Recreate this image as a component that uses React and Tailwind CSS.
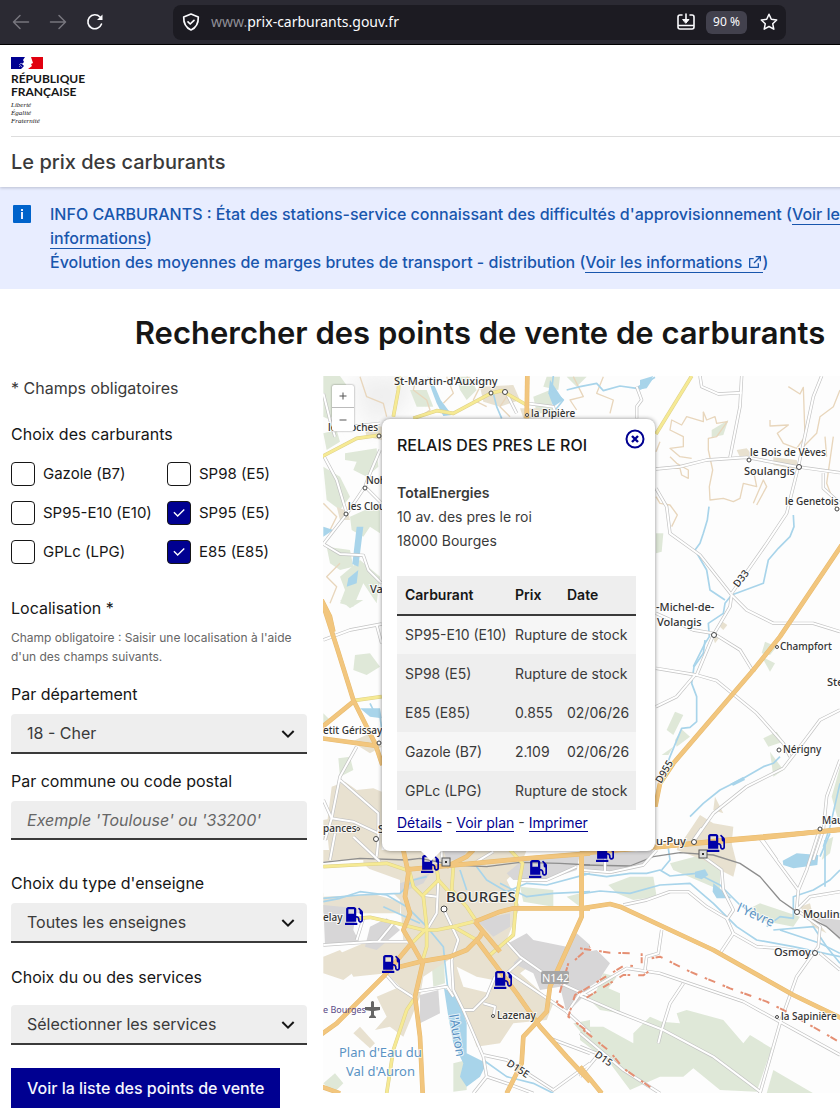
import React, { useState } from "react";
import { RiAddLine, RiArrowDownSLine, RiCheckLine, RiExternalLinkLine, RiSubtractLine } from "react-icons/ri";
import { FaGasPump } from "react-icons/fa";

const FUELS = [
  { id: "gazole", label: "Gazole (B7)" },
  { id: "sp98", label: "SP98 (E5)" },
  { id: "e10", label: "SP95-E10 (E10)" },
  { id: "sp95", label: "SP95 (E5)" },
  { id: "gplc", label: "GPLc (LPG)" },
  { id: "e85", label: "E85 (E85)" },
];

const PRICES = [
  { fuel: "SP95-E10 (E10)" },
  { fuel: "SP98 (E5)" },
  { fuel: "E85 (E85)", price: "0.855", date: "02/06/26" },
  { fuel: "Gazole (B7)", price: "2.109", date: "02/06/26" },
  { fuel: "GPLc (LPG)" },
];

// Pin positions, from the top left corner of the map
const PINS = [
  { left: 98, top: 479 },
  { left: 22, top: 531 },
  { left: 59, top: 579 },
  { left: 171, top: 595 },
  { left: 206, top: 484 },
  { left: 384, top: 458 },
  { left: 273, top: 468 },
];

// Map tiles, drawn three units to the pixel
const TILES = [
  {
    x: -3, y: -6,
    forest: [
      "10,18 60,18 90,60 60,100 30,150 10,140", "10,190 50,180 60,215 20,240", "75,250 170,235 175,290 140,320 100,300 110,275 75,270",
      "10,290 60,320 90,380 60,420 20,390", "90,440 180,400 180,490 150,470 130,500 95,480", "20,530 90,540 100,590 60,600 30,580",
      "120,570 180,620 170,700 130,640 100,710 60,700 75,660 60,620", "410,20 450,20 470,60 440,90 420,60", "640,80 690,60 700,130 650,130",
      "270,60 320,60 340,110 290,110", "740,20 800,20 770,50", "680,20 720,20 715,60 670,50",
    ],
    town: ["480,50 580,45 600,90 540,110 490,95", "130,160 185,170 185,210 140,200", "50,410 85,425 90,450 60,450", "600,115 660,115 650,145 610,145"],
    water: ["322,18 345,50 362,90 396,135 370,138 350,100 335,60", "110,470 130,470 115,590 97,582", "10,470 40,480 10,500", "85,625 115,600 110,640 80,650", "690,30 730,90 700,110 685,70", "950,50 1000,25 980,55 950,60"],
    river: ["520,70 530,110 545,145", "700,18 695,60 730,90 690,140", "740,60 780,50 830,40 850,62 900,48 950,55 1005,22"],
    contour: [
      "290,20 280,60 320,90 330,120 300,140", "440,20 480,50 460,90 500,110", "560,80 540,110 570,140", "760,20 790,80 750,90 770,120",
      "850,20 830,70 880,90 870,130", "10,400 50,440 30,480", "60,580 20,620 50,650 30,700", "120,20 140,80 190,100 200,140", "380,20 400,70 370,100",
    ],
    white: [
      "10,70 30,150 45,200", "10,255 50,330 80,430", "180,240 150,310 135,350 80,432 10,522", "10,522 60,552 130,556 145,600 185,640", "135,350 185,400",
      "560,70 590,130", "620,100 700,110 710,140", "950,50 965,90 950,110 950,145", "90,170 180,160",
    ],
    yellow: ["238,18 235,60 220,140", "280,145 350,122 400,130 512,70 545,62 620,105", "5,260 110,205 183,195"],
    orange: ["622,18 620,145", "5,690 30,740 40,785"],
  },
  {
    x: 317, y: -6,
    forest: ["215,180 265,150 250,195 215,202", "48,490 70,490 65,545 48,550", "375,815 410,830 390,855 365,850"],
    town: ["290,240 320,235 350,270 300,262", "400,262 470,270 475,300 400,285", "248,755 262,765 250,780 240,770", "215,790 240,800 225,820"],
    water: ["0,30 40,18 20,50 0,60"],
    river: ["207,410 202,450 190,490 180,520 165,540 200,600 210,660 255,690", "460,435 462,470 450,500 415,535 385,570 370,640 275,675 255,700 250,730 205,760 208,800 195,820 160,890"],
    contour: [
      "190,125 200,150 225,140 230,160 262,155 230,200 205,205 205,240 218,300 208,350 210,390 250,385 280,395 300,385 310,340 350,350 340,300",
      "190,125 190,155 140,140 125,165 95,150 90,180 130,200 130,230 90,235 120,260 155,265", "60,215 48,245", "90,260 110,280 145,300 145,325 125,315 120,295 100,295",
      "445,50 480,72 490,52 495,200 470,235 430,220 412,190 445,165 390,168 390,150", "48,380 60,400 90,405 112,435 95,470", "600,60 580,110 540,140 530,190 490,230",
      "340,400 370,330 380,350 350,405", "555,200 560,260", "580,200 560,340 590,420",
    ],
    white: [
      "180,18 185,50 235,72 305,68", "305,18 300,110 270,262", "48,297 120,290 200,270 320,262 470,290 600,308", "545,18 520,80 475,290 440,430 380,520 275,670",
      "550,310 550,355 600,400", "48,355 80,410 90,490 180,555 275,675 320,720 400,760 520,760 600,785", "275,675 270,710 220,795 170,915", "48,730 160,780 220,790 300,840 340,905",
    ],
    yellow: ["155,18 48,192"],
    orange: ["605,525 420,800 340,900"],
  },
  {
    x: -3, y: 224,
    forest: ["105,165 150,160 180,200 140,225 100,210", "60,0 130,0 90,25", "55,475 90,470 100,510 60,530", "10,340 30,360 10,380", "40,600 60,600 50,640"],
    town: ["35,560 75,545 110,570 160,565 185,575 185,780 30,780 20,680", "95,425 150,400 185,440 150,460", "10,660 60,650 60,720 10,720"],
    water: ["120,325 180,325 185,355 150,350"],
    river: ["150,310 160,330", "180,350 187,400"],
    white: ["10,120 90,90 185,72", "170,75 185,130", "110,440 60,530 35,655 15,720", "60,540 175,640 175,720", "35,655 100,665 175,700", "10,600 35,655", "175,720 170,770"],
    yellow: ["100,302 185,290"],
    orange: ["8,10 50,140 100,300 165,430 187,495", "5,382 100,305", "5,415 165,437"],
  },
  {
    x: 317, y: 264,
    forest: [
      "105,215 130,225 100,285 80,270", "125,268 150,290 110,320 105,300", "65,345 100,320 85,345", "370,295 410,275 430,305 385,320", "390,335 430,390 400,410", "365,50 405,70 390,95",
      "600,380 575,470 600,560", "560,600 580,590 570,640 545,660",
    ],
    town: ["180,525 220,550 280,560 270,660 130,600", "225,470 250,520 220,510"],
    water: ["270,432 310,410 315,420 280,437"],
    river: ["195,0 190,40 162,80 155,130 170,170 170,245 150,262 125,265 90,350 60,430", "420,350 400,370 370,380 310,415 240,450 190,490 150,530", "600,430 570,560 550,620"],
    white: [
      "48,85 170,105 230,122 350,220 430,310 450,350", "48,200 110,170 165,105", "600,210 540,240 480,320 430,385 320,440 220,520 160,605", "600,360 560,470 550,570 520,660", "365,595 410,660",
    ],
    orange: ["342,88 100,370 60,430 46,500", "45,622 250,600 600,570"],
  },
  {
    x: -3, y: 454,
    forest: [
      "50,115 75,115 75,170 50,195", "330,330 370,350 375,460 340,470", "600,170 700,180 700,230 610,215", "10,760 45,730 70,760 40,790", "400,700 440,690 440,780 400,785",
      "760,580 810,570 810,640", "740,200 780,190 780,230",
    ],
    town: [
      "130,60 620,60 600,110 560,150 600,230 560,330 640,400 600,430 700,520 680,570 580,580 540,640 470,650 440,560 400,500 400,380 310,440 300,500 250,620 210,590 165,600 200,560 170,500 240,470 200,430 100,440 60,370 130,340 250,335 240,210 130,100",
      "10,380 60,360 110,420 70,450 10,430", "120,590 165,640 150,655 100,610", "10,190 120,180 240,215 240,250 10,250", "10,60 60,60 50,90 10,95",
    ],
    industry: [
      "10,225 110,235 100,300 120,340 15,345", "150,290 200,265 240,300 170,360 135,350", "240,160 330,130 310,160 240,190", "560,130 620,80 780,70 770,120 680,150 580,150", "470,270 570,250 570,290 520,320",
      "565,340 620,310 640,330 740,350 770,310 810,345 810,480 740,550 720,470 660,480 640,430 580,400 600,380", "300,495 355,480 360,550 300,580", "370,60 440,60 430,90 380,90",
    ],
    open: ["410,410 470,440 520,450 510,490 430,470", "10,110 130,110 240,150 240,190 10,200"],
    water: ["372,475 415,500 440,580 440,670 500,700 480,740 440,770 420,740 430,700 400,640 385,560"],
    river: [
      "10,215 60,205 120,185 200,195 260,230 320,290 370,350 375,400 385,490", "10,205 120,195 240,190 280,150 320,140", "190,230 300,280", "470,110 500,150 560,185 620,160 680,165 810,130",
      "540,160 620,200 700,190 810,185", "490,690 560,740 640,760 700,790", "420,120 440,180",
    ],
    rail: ["10,97 120,85 260,90 300,85 400,105 500,110 600,97 720,100 810,105"],
    white: [
      "355,150 350,250 320,300", "372,240 415,330 395,390 400,480 430,540 460,540 500,500 525,440", "10,345 160,335 270,335", "130,265 110,330", "220,280 175,335", "285,485 380,470 400,500",
      "195,430 230,470 285,505", "430,540 490,680 500,740 460,790", "490,675 560,690 700,780 810,700", "570,430 740,545 810,610", "560,335 600,380 700,450 810,500", "490,520 525,530 520,560",
      "560,430 605,390", "500,740 560,760 640,790", "690,625 810,670", "740,550 780,490", "30,90 45,10", "180,95 100,20", "310,195 350,200", "600,150 680,150 770,110", "365,60 365,90", "470,95 520,65",
    ],
    yellow: [
      "10,110 100,105 200,100 260,120", "110,265 150,262 230,280 310,300 350,300 400,290 460,275", "265,110 280,170 310,200 320,290 320,350 305,400", "570,60 608,100 590,200 580,315 510,375",
      "350,110 355,150 310,195", "355,150 400,200", "400,290 470,330", "400,110 395,180 440,230 470,275", "320,295 270,345", "280,510 260,540 220,660 200,790",
    ],
    orange: [
      "250,60 265,130 255,200 270,250 250,300 280,350 308,400 285,500 300,620 308,790", "5,612 50,580 190,440 270,345", "240,410 300,395 390,380 440,360 480,320 490,300", "265,118 330,112 460,100 620,85 810,70",
      "465,275 540,245 580,235 810,235", "785,75 785,260 690,470 680,545 610,620 605,700 560,790", "470,330 530,410 590,490 660,590 740,680 810,755", "465,275 540,365", "380,110 440,80 460,60", "5,770 60,790",
    ],
    military: ["765,390 810,350", "745,400 710,520 740,540", "780,485 765,495 745,560 810,610"],
  },
  {
    x: 257, y: 454,
    forest: [
      "85,165 150,140 220,140 230,200 160,210 110,190", "270,100 420,60 420,180 350,150 280,120", "500,240 540,220 660,260 640,290 540,270",
      "0,590 70,590 160,640 160,610 210,560 245,575 300,580 290,550 320,540 430,570 490,640 510,615 575,655 530,785 420,780 340,715 310,740 240,740 150,780 90,700 0,630", "580,720 700,790 560,790",
      "70,430 110,440 85,475 120,490 120,550 60,540 20,500 50,480",
    ],
    town: ["290,60 300,30 450,20 470,100 460,140 420,120 370,90", "660,230 690,220 700,260 740,310 700,290"],
    industry: ["0,370 50,360 90,400 70,430 60,450 0,490", "10,75 220,60 200,100 100,130 10,115", "700,260 780,270 780,330 740,290"],
    water: ["608,92 650,70 715,75 712,105 640,115 610,105", "345,125 375,118 385,135 365,148 345,142", "400,160 455,205 410,205 398,185"],
    river: [
      "10,130 80,140 150,130 200,130 240,120 270,138 350,130 420,165 480,225 520,250", "10,190 60,183 150,190 240,165 330,160 400,220 470,290 530,330 640,350 780,380", "560,290 600,260 640,265 640,200 700,180 750,150 780,120",
      "580,300 700,290 740,350 780,400", "265,55 270,90 245,120", "735,30 735,170", "600,300 720,340 780,370", "750,10 720,80",
    ],
    rail: ["10,105 150,108 220,80 300,68 400,75 480,100 540,140 600,210 650,245 740,290 780,325"],
    white: [
      "10,120 90,127 190,105 230,60", "130,225 200,210 270,185 325,185 380,230 440,265 460,310 530,350 600,355 700,370", "370,80 425,120 430,180 460,240 440,270", "460,310 420,370", "245,300 235,370 200,380 195,420",
      "540,25 655,180 650,240 720,290 715,350 700,370 650,440 600,580 540,790", "655,180 680,120 715,10", "650,240 690,200 780,185", "0,497 140,415 240,430 490,515 780,675", "310,460 270,520 245,600 235,640",
      "0,497 110,545 250,600 400,680 540,785", "0,610 130,720 240,790", "340,30 365,-5", "0,650 50,670", "50,680 0,740", "720,370 780,420", "75,80 75,125",
    ],
    orange: ["0,70 240,50 540,24 780,-2", "5,70 5,240", "0,236 90,222 120,230 400,360 640,495 785,565", "0,710 65,790"],
    military: ["0,355 90,368 160,370", "185,370 185,400", "215,385 240,380 330,425 450,475 560,515 620,545 785,640", "0,487 135,405 160,408", "205,425 190,436 130,435 0,515", "10,600 90,665 130,715 230,785"],
  },
];

const PLACES = [
  { x: 394, y: 385, size: 11, text: "St-Martin-d'Auxigny" },
  { x: 531, y: 417, size: 10, text: "la Pipière" },
  { x: 328, y: 431, size: 10, text: "les Roches" },
  { x: 366, y: 484, size: 10, text: "Noh" },
  { x: 348, y: 510, size: 10, text: "les Clou" },
  { x: 370, y: 593, size: 11, text: "Va" },
  { x: 323, y: 734, size: 10, text: "etit Gérissay" },
  { x: 323, y: 832, size: 10, text: "pances" },
  { x: 378, y: 833, size: 11, text: "S" },
  { x: 750, y: 456, size: 10, text: "le Bois de Vèves" },
  { x: 744, y: 475, size: 11, text: "Soulangis" },
  { x: 785, y: 505, size: 10, text: "le Genetois" },
  { x: 656, y: 611, size: 11, text: "-Michel-de-" },
  { x: 657, y: 626, size: 11, text: "Volangis" },
  { x: 780, y: 650, size: 10, text: "Champfort" },
  { x: 827, y: 686, size: 11, text: "Ste-Solange" },
  { x: 783, y: 753, size: 10, text: "Nérigny" },
  { x: 822, y: 824, size: 10, text: "Maubranche" },
  { x: 656, y: 845, size: 11, text: "u-Puy" },
  { x: 803, y: 918, size: 11, text: "Moulins-sur-Yèvre" },
  { x: 774, y: 956, size: 11, text: "Osmoy" },
  { x: 781, y: 1020, size: 10, text: "la Sapinière" },
  { x: 497, y: 1019, size: 10, text: "Lazenay" },
  { x: 323, y: 921, size: 10, text: "elay" },
  { x: 446, y: 902, size: 15, text: "BOURGES" },
];

// Small rings that mark a village or a hamlet
const DOTS = [
  [491, 393, 2], [505, 392, 2.5], [527, 415, 1.5], [379, 436, 2], [365, 488, 2], [346, 514, 2], [379, 743, 2], [358, 829, 1.5], [376, 839, 2.5], [749, 460, 2], [799, 467, 2.5],
  [837, 509, 2], [714, 635, 2.5], [777, 647, 1.5], [779, 750, 2], [820, 829, 2], [694, 842, 2.5], [797, 912, 2.5], [815, 953, 2.5], [777, 1017, 1.5], [493, 1016, 1.5], [444, 909, 3],
];

function Areas({ kind, className }) {
  return TILES.map((tile, i) => (
    <g key={i} transform={`translate(${tile.x + 323} ${tile.y + 376}) scale(0.33333)`} className={className}>
      {(tile[kind] || []).map((points) => <polygon key={points} points={points} />)}
    </g>
  ));
}

function Lines({ kind, className, width, dash }) {
  return TILES.map((tile, i) => (
    <g
      key={i} transform={`translate(${tile.x + 323} ${tile.y + 376}) scale(0.33333)`}
      className={className} fill="none" strokeWidth={width} strokeDasharray={dash} strokeLinejoin="round"
    >
      {(tile[kind] || []).map((points) => <polyline key={points} points={points} />)}
    </g>
  ));
}

function MapDrawing() {
  return (
    <svg viewBox="323 376 626 717" preserveAspectRatio="xMinYMin slice" className="block w-full h-full font-['Noto_Sans',sans-serif]" role="img" aria-label="Carte des points de vente">
      <defs>
        <filter id="relief" x="-50%" y="-50%" width="200%" height="200%"><feGaussianBlur stdDeviation="12" /></filter>
      </defs>
      <rect x="323" y="376" width="626" height="717" fill="#fdfdfd" />
      <polygon points="350,376 420,376 400,410 370,430" fill="#eeeeee" filter="url(#relief)" />
      <Areas kind="forest" className="fill-[#dfe8d8]" />
      <Areas kind="town" className="fill-[#e8e1d0]" />
      <Areas kind="industry" className="fill-[#d7d6d7]" />
      <Areas kind="open" className="fill-[#fdfdfd]" />
      <Lines kind="contour" className="stroke-[#e8d6bc]" width={4} />
      <Areas kind="water" className="fill-[#a8d4ea]" />
      <Lines kind="river" className="stroke-[#a8d4ea]" width={5} />
      <Lines kind="rail" className="stroke-[#8e8e8e]" width={4} />
      <Lines kind="white" className="stroke-[#c3c3c3]" width={10} />
      <Lines kind="white" className="stroke-white" width={6} />
      <Lines kind="yellow" className="stroke-[#ddd08a]" width={11} />
      <Lines kind="yellow" className="stroke-[#f6ea94]" width={8} />
      <Lines kind="orange" className="stroke-[#e8bb6f]" width={14} />
      <Lines kind="orange" className="stroke-[#f2c67e]" width={11} />
      <Lines kind="military" className="stroke-[#e58f73]" width={6} dash="8 4 22 24" />

      {DOTS.map(([x, y, r]) => (
        <circle key={`${x}-${y}`} cx={x} cy={y} r={r} fill="#fff" stroke="#444" />
      ))}
      {[[446, 862], [703, 854]].map(([x, y]) => (
        <g key={x}>
          <rect x={x - 4} y={y - 4} width="8" height="8" fill="#ddd" stroke="#555" />
          <rect x={x - 1} y={y - 1} width="2" height="2" fill="#333" />
        </g>
      ))}

      <g fill="#333" fontWeight="500" stroke="#fff" strokeWidth="2" strokeOpacity="0.8" paintOrder="stroke">
        {PLACES.map((place) => (
          <text key={place.text} x={place.x} y={place.y} fontSize={place.size}>{place.text}</text>
        ))}
        <text fontSize="10" transform="translate(738 588) rotate(-52)">D33</text>
        <text fontSize="10" transform="translate(661 784) rotate(-60)">D955</text>
        <text fontSize="10" transform="translate(506 1065) rotate(33)">D15E</text>
        <text fontSize="10" transform="translate(594 1056) rotate(35)">D15</text>
      </g>
      <rect x="541" y="971" width="28" height="13" rx="2" fill="#a6a6a6" />
      <text x="542" y="982" fontSize="11" fill="#fff">N142</text>
      <g fill="#5b93c4" stroke="#fff" strokeWidth="2" strokeOpacity="0.7" paintOrder="stroke">
        <text x="339" y="1057" fontSize="13">Plan d'Eau du</text>
        <text x="346" y="1076" fontSize="13">Val d'Auron</text>
        <text fontSize="13" transform="translate(449 1015) rotate(80)">l'Auron</text>
        <text fontSize="13" transform="translate(736 911) rotate(24)">l'Yèvre</text>
      </g>
      <text x="323" y="1013" fontSize="9" fill="#5a4a86">e Bourges</text>
      <path d="M371 1002 q1.500 -2 3 0 V1007 H380 V1010 L374 1011 V1015 L376 1017 V1018 H369 V1017 L371 1015 V1011 L365 1010 V1007 H371 Z" fill="#666" />
    </svg>
  );
}

function StationPopup({ onClose }) {
  return (
    <div className="absolute left-[59px] top-[43px] w-[273px] bg-white rounded-lg shadow-[0_0_4px_rgba(0,0,0,0.45)] px-[15px] pt-[14px] pb-4 text-[#3a3a3a]">
      <div className="flex justify-between">
        <h2 className="text-base leading-6 font-medium text-[#161616]">RELAIS DES PRES LE ROI</h2>
        <button type="button" onClick={onClose} aria-label="Fermer" className="-mr-[5px] -mt-1 h-5 text-[#000091]">
          <svg viewBox="0 0 20 20" className="w-5 h-5" fill="none" stroke="currentColor">
            <circle cx="10" cy="10" r="8.500" strokeWidth="2" />
            <path d="M7 7l6 6M13 7l-6 6" strokeWidth="2.400" />
          </svg>
        </button>
      </div>

      <address className="not-italic text-sm leading-6 mt-6">
        <strong className="block font-semibold">TotalEnergies</strong>
        10 av. des pres le roi<br />
        18000 Bourges
      </address>

      <table className="mt-[23px] w-[239px] text-sm text-left whitespace-nowrap table-fixed">
        <thead className="bg-[#eeeeee] text-[#161616] border-b-2 border-[#3a3a3a]">
          <tr className="h-[39px]">
            <th className="w-[110px] pl-2 font-semibold">Carburant</th>
            <th className="w-[52px] pl-2 font-semibold">Prix</th>
            <th className="pl-2 font-semibold">Date</th>
          </tr>
        </thead>
        <tbody>
          {PRICES.map((row) => (
            <tr key={row.fuel} className="h-[39px] bg-[#f6f6f6] even:bg-[#eeeeee] nth-3:bg-[#eeeeee] nth-4:bg-[#f6f6f6] nth-5:bg-[#eeeeee]">
              <td className="pl-2">{row.fuel}</td>
              {row.price ? (
                <>
                  <td className="pl-2">{row.price}</td>
                  <td className="pl-2">{row.date}</td>
                </>
              ) : (
                <td colSpan={2} className="pl-2">Rupture de stock</td>
              )}
            </tr>
          ))}
        </tbody>
      </table>

      <p className="pt-px text-sm leading-6">
        <a href="#details" className="text-[#000091] border-b border-[#000091]">Détails</a>
        {" - "}
        <a href="#plan" className="text-[#000091] border-b border-[#000091]">Voir plan</a>
        {" - "}
        <a href="#imprimer" className="text-[#000091] border-b border-[#000091]">Imprimer</a>
      </p>
      <svg viewBox="0 0 20 10" className="absolute left-[39px] top-full w-5 h-[10px]">
        <path d="M0 0H20L10 10Z" fill="#fff" />
      </svg>
    </div>
  );
}

function SelectField({ id, label, options, className, gap }) {
  return (
    <div className={className}>
      <label htmlFor={id} className="block leading-6 text-[#161616]">{label}</label>
      <div className={`relative ${gap || "mt-2"}`}>
        <select id={id} className="appearance-none w-full h-10 pl-4 pr-10 rounded-t bg-[#eeeeee] border-b-2 border-[#3a3a3a] text-[#3a3a3a]">
          {options.map((option) => <option key={option}>{option}</option>)}
        </select>
        <RiArrowDownSLine className="absolute right-[7px] top-2 w-6 h-6 text-[#161616] pointer-events-none" />
      </div>
    </div>
  );
}

function BrowserBar() {
  return (
    <div className="flex items-center h-[45px] bg-[#2b2a33] border-b border-black text-[#fbfbfe] font-['Noto_Sans',sans-serif]">
      <div className="flex items-center gap-[19px] w-[173px] pl-3">
        <button type="button" aria-label="Page précédente" className="text-[#77767e]">
          <svg viewBox="0 0 18 18" className="w-[18px] h-[18px]" fill="none" stroke="currentColor" strokeWidth="1.500" strokeLinecap="round" strokeLinejoin="round"><path d="M16.500 9H1.500M8 2.500L1.500 9l6.500 6.500" /></svg>
        </button>
        <button type="button" aria-label="Page suivante" className="text-[#77767e]">
          <svg viewBox="0 0 18 18" className="w-[18px] h-[18px]" fill="none" stroke="currentColor" strokeWidth="1.500" strokeLinecap="round" strokeLinejoin="round"><path d="M1.500 9H16.500M10 2.500L16.500 9 10 15.500" /></svg>
        </button>
        <button type="button" aria-label="Actualiser">
          <svg viewBox="0 0 18 18" className="w-[18px] h-[18px]" fill="none" stroke="currentColor" strokeWidth="1.600" strokeLinecap="round"><path d="M15.500 11A7 7 0 1 1 14 4" /><path d="M16.500 1.500V7H11Z" fill="currentColor" stroke="none" /></svg>
        </button>
      </div>
      <div className="flex items-center h-[35px] flex-1 max-w-[613px] rounded-lg bg-[#1c1b22] pl-2 pr-[7px]">
        <svg viewBox="0 0 20 20" className="w-5 h-5" fill="none" stroke="currentColor" strokeWidth="1.700" strokeLinecap="round" strokeLinejoin="round">
          <path d="M10 2L17.300 5C17.500 11 15 15.700 10 18C5 15.700 2.500 11 2.700 5Z" />
          <path d="M7 9.800l2.200 2.200L13 8.300" />
        </svg>
        <span className="ml-[10px] text-sm text-[#8f8e96]">www.<span className="text-[#fbfbfe]">prix-carburants.gouv.fr</span></span>
        <button type="button" aria-label="Installer" className="ml-auto">
          <svg viewBox="0 0 20 20" className="w-5 h-5" fill="none" stroke="currentColor" strokeWidth="1.600" strokeLinecap="round">
            <path d="M6 3H4Q2 3 2 5V15Q2 17 4 17H16Q18 17 18 15V5Q18 3 16 3H14M2 13.500H18M10 2V10" />
            <path d="M7 7.500H13L10 11Z" fill="currentColor" strokeWidth="1" strokeLinejoin="round" />
          </svg>
        </button>
        <button type="button" className="ml-[10px] w-[41px] h-[23px] rounded-md bg-[#42414d] text-xs">90 %</button>
        <button type="button" aria-label="Ajouter aux favoris" className="ml-3">
          <svg viewBox="0 0 20 20" className="w-5 h-5" fill="none" stroke="currentColor" strokeWidth="1.500" strokeLinejoin="round">
            <path d="M10 2.300L12.300 7.300L17.700 8L13.700 11.700L14.800 17.200L10 14.500L5.200 17.200L6.300 11.700L2.300 8L7.700 7.300Z" />
          </svg>
        </button>
      </div>
    </div>
  );
}

export default function App() {
  const [checked, setChecked] = useState(["sp95", "e85"]);
  const [popupOpen, setPopupOpen] = useState(true);

  const toggleFuel = (id) => {
    setChecked(checked.includes(id) ? checked.filter((f) => f !== id) : [...checked, id]);
  };

  return (
    <div className="min-h-screen overflow-x-hidden bg-white text-base text-[#3a3a3a] font-['Inter',sans-serif]">
      <BrowserBar />

      <div className="min-w-[960px]">
        {/* Header */}
        <header className="relative px-[11px] pt-3 shadow-[0_1px_3px_rgba(0,0,18,0.2)]">
          <div className="h-20 border-b border-[#dddddd] text-[#161616]">
            <svg viewBox="0 0 32 12" className="w-8 h-3">
              <rect width="32" height="12" fill="#fff" />
              <path d="M0 0H14L12 3L13 5L11 7L13 9L10 12H0Z" fill="#000091" />
              <path d="M20 0H32V12H17L21 9L20 7L22 6L21 3Z" fill="#e1000f" />
              <path d="M8 8Q10 5 12 7M8 10Q10 7 11 10" stroke="#b8b8e0" fill="none" strokeWidth="0.800" />
            </svg>
            <p className="mt-[3px] text-xs leading-[13px] font-bold font-['Lato',sans-serif]">RÉPUBLIQUE<br />FRANÇAISE</p>
            <p className="mt-[3px] text-[7px] leading-[8px] italic font-['Liberation_Serif',serif]">Liberté<br />Égalité<br />Fraternité</p>
          </div>
          <p className="py-[11px] text-xl leading-7 font-medium">Le prix des carburants</p>
        </header>

        {/* Alert banner */}
        <div className="flex items-start gap-4 px-3 pt-[15px] pb-[15px] bg-[#e8edff] text-[#1856ad] font-medium">
          <svg viewBox="0 0 20 20" className="w-5 h-5 mt-[2px] shrink-0">
            <rect x="1" y="1" width="18" height="18" rx="1" fill="#0063cb" />
            <path d="M9 5h2v2H9zM9 8h2v7H9z" fill="#e8edff" />
          </svg>
          <p className="leading-6 pl-[2px] pr-8">
            INFO CARBURANTS : État des stations-service connaissant des difficultés d'approvisionnement (<a href="#stations" className="border-b border-current">Voir les informations</a>)<br />
            Évolution des moyennes de marges brutes de transport - distribution (<a href="#marges" className="border-b border-current">Voir les informations <RiExternalLinkLine className="inline w-4 h-4 align-[-2px]" /></a>)
          </p>
        </div>

        <main className="px-[11px]">
          <h1 className="pt-6 pb-[23px] text-[31px] leading-10 font-semibold text-center text-[#161616]">Rechercher des points de vente de carburants</h1>

          <div className="flex items-start gap-4">
            {/* Search form */}
            <form onSubmit={(e) => e.preventDefault()} className="w-[296px] shrink-0 pb-3">
              <p className="leading-6">* Champs obligatoires</p>

              <fieldset className="mt-[22px]">
                <legend className="leading-6 text-[#161616]">Choix des carburants</legend>
                <div className="grid grid-cols-[156px_1fr] gap-y-[15px] pt-4 text-[15px]">
                  {FUELS.map((fuel) => (
                    <label key={fuel.id} className="flex items-center gap-2 h-6 text-[#161616] whitespace-nowrap">
                      <span className="relative w-6 h-6 shrink-0">
                        <input
                          type="checkbox" checked={checked.includes(fuel.id)} onChange={() => toggleFuel(fuel.id)}
                          className="block appearance-none w-6 h-6 rounded border border-[#161616] checked:bg-[#000091]"
                        />
                        {checked.includes(fuel.id) && <RiCheckLine className="absolute left-1 top-1 w-4 h-4 text-white pointer-events-none" />}
                      </span>
                      {fuel.label}
                    </label>
                  ))}
                </div>
              </fieldset>

              <p className="mt-8 leading-6 text-[#161616]">Localisation *</p>
              <p className="mt-2 text-xs leading-[19px] text-[#666666]">Champ obligatoire : Saisir une localisation à l'aide d'un des champs suivants.</p>

              <SelectField id="departement" label="Par département" options={["18 - Cher"]} className="mt-4" />

              <div className="mt-[15px]">
                <label htmlFor="commune" className="block leading-6 text-[#161616]">Par commune ou code postal</label>
                <input
                  id="commune" type="text" placeholder="Exemple 'Toulouse' ou '33200'"
                  className="mt-2 block w-full h-[39px] px-4 rounded-t bg-[#eeeeee] border-b-2 border-[#3a3a3a] placeholder:italic placeholder:text-[#666666]"
                />
              </div>

              <SelectField id="enseigne" label="Choix du type d'enseigne" options={["Toutes les enseignes"]} className="mt-[31px]" />
              <SelectField id="services" label="Choix du ou des services" options={["Sélectionner les services"]} className="mt-[22px]" gap="mt-4" />

              <button type="submit" className="mt-[23px] h-10 px-4 bg-[#000091] text-[#f5f5fe] font-medium">Voir la liste des points de vente</button>
            </form>

            {/* Map */}
            <div className="relative flex-1 h-[717px]">
              <MapDrawing />
              <div className="absolute left-[9px] top-[9px] flex flex-col w-[22px] rounded-xs bg-white shadow-[0_0_2px_rgba(0,0,0,0.5)] text-[#555555]">
                <button type="button" aria-label="Zoom avant" className="grid place-items-center h-[23px] border-b border-[#bbbbbb]"><RiAddLine className="w-3 h-3" /></button>
                <button type="button" aria-label="Zoom arrière" className="grid place-items-center h-[23px]"><RiSubtractLine className="w-3 h-3" /></button>
              </div>
              {PINS.map((pin) => (
                <button key={`${pin.left}-${pin.top}`} type="button" aria-label="Point de vente" onClick={() => setPopupOpen(true)} className="absolute text-[#0000a8]" style={{ left: pin.left, top: pin.top }}>
                  <FaGasPump className="w-[18px] h-[18px]" />
                </button>
              ))}
              {popupOpen && <StationPopup onClose={() => setPopupOpen(false)} />}
            </div>
          </div>
        </main>
      </div>
    </div>
  );
}
